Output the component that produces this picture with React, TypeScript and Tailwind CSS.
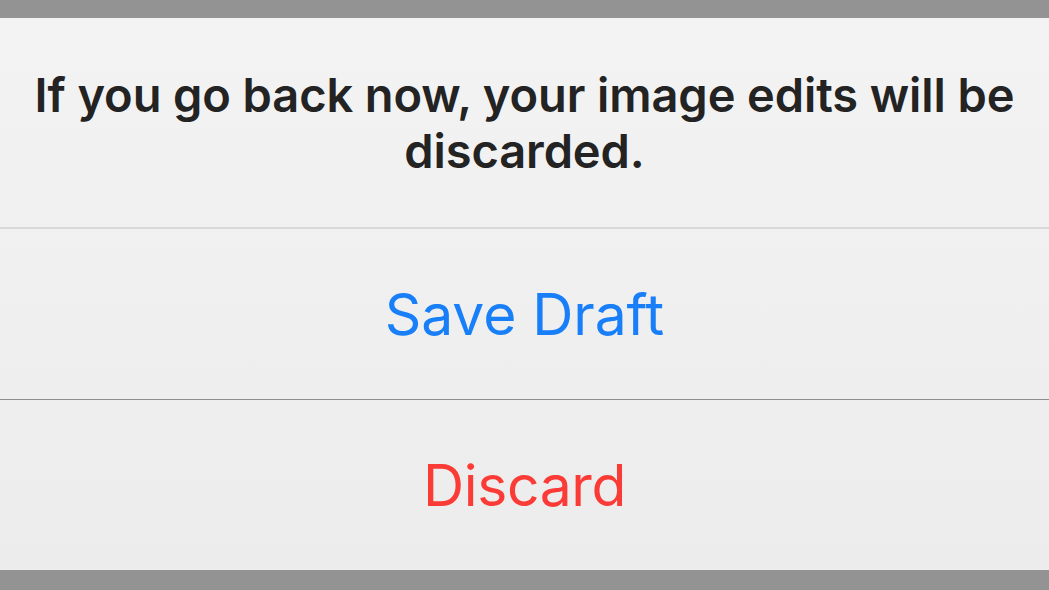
export default function App() {
  return (
    <div className="w-[1049px] h-[590px] flex flex-col bg-[#939393]" style={{ fontFamily: 'Inter, "Noto Sans", sans-serif' }}>
      <div className="h-[18px] shrink-0" />
      <div className="flex-1 flex flex-col bg-gradient-to-b from-[#f3f3f3] to-[#ececec]">
        <div className="h-[209px] flex items-center justify-center text-center px-3">
          <p className="text-[47px] leading-[56px] font-semibold text-[#232323] tracking-[-0.1px]">
            If you go back now, your image edits will be discarded.
          </p>
        </div>
        <div className="h-[2px] bg-[#d9d9db]" />
        <div className="h-[170px] flex items-center justify-center">
          <span className="text-[57px] leading-none text-[#187ff8] tracking-[-0.1px]">Save Draft</span>
        </div>
        <div className="h-[1px] bg-[#8e8e8e]" />
        <div className="h-[170px] flex items-center justify-center">
          <span className="text-[57px] leading-none text-[#fb3c36] tracking-[-0.4px]">Discard</span>
        </div>
      </div>
      <div className="h-[20px] shrink-0" />
    </div>
  );
}
